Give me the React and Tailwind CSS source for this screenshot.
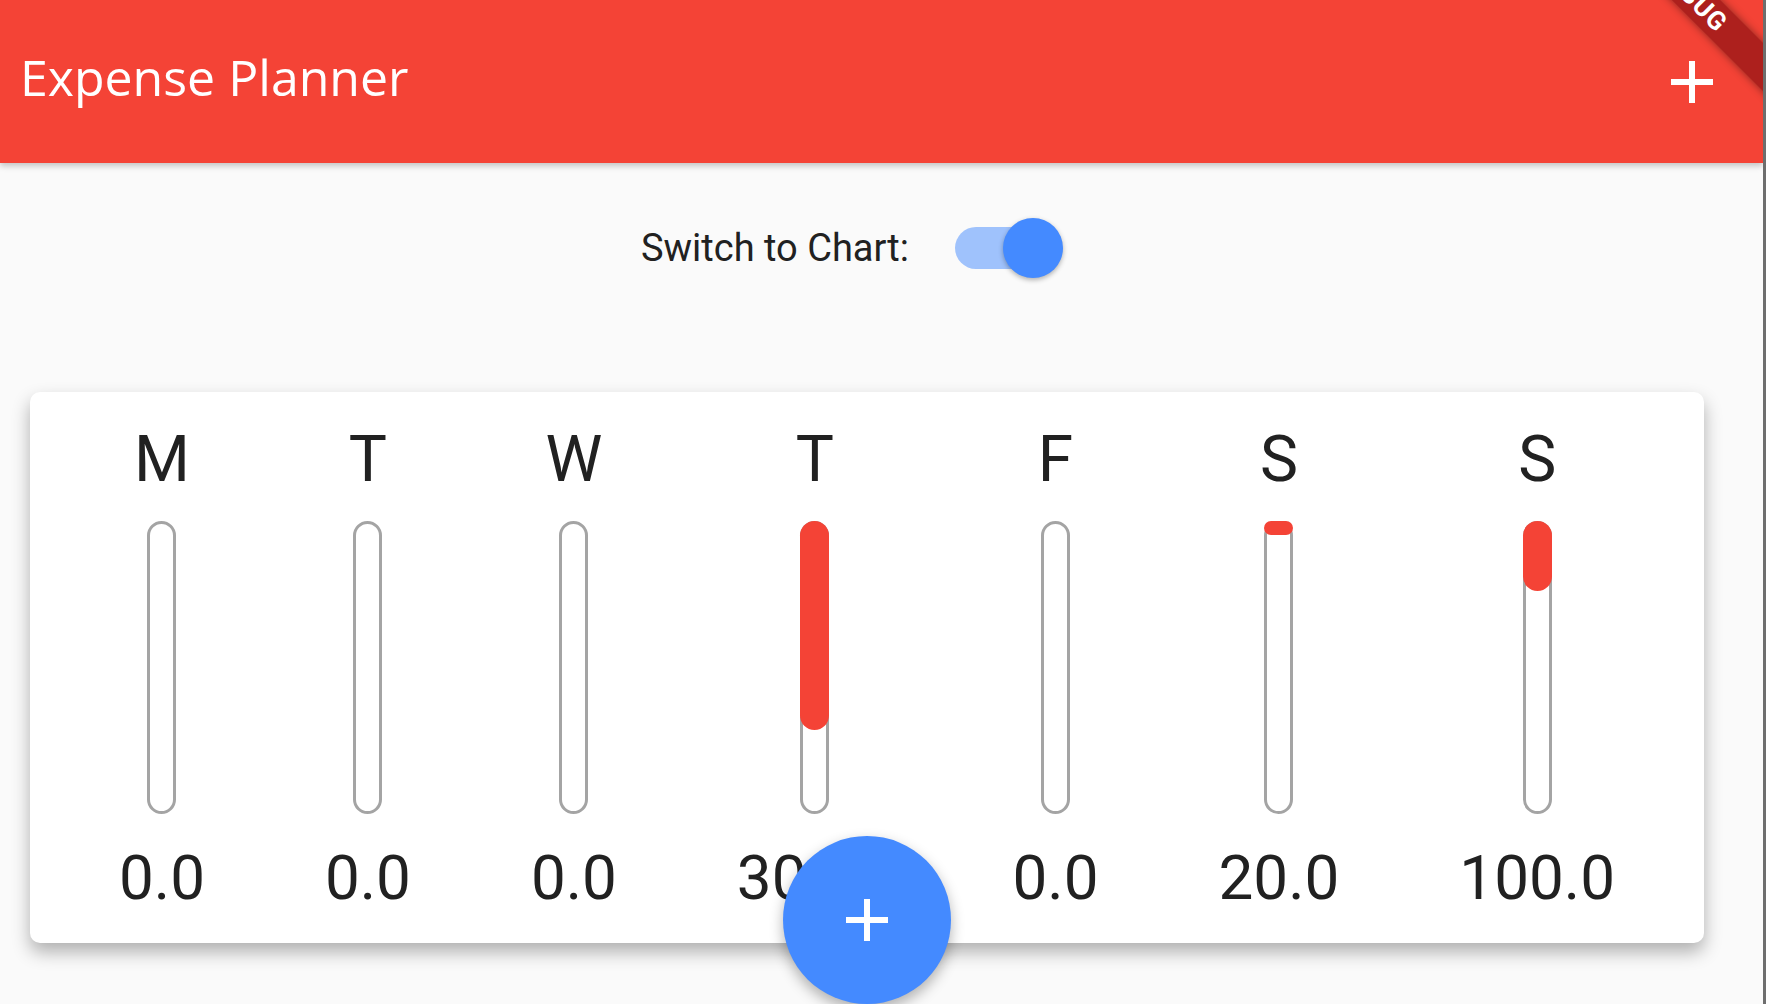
import React from 'react';

const days = [
  { label: 'M', amount: 0 },
  { label: 'T', amount: 0 },
  { label: 'W', amount: 0 },
  { label: 'T', amount: 300 },
  { label: 'F', amount: 0 },
  { label: 'S', amount: 20 },
  { label: 'S', amount: 100 },
];

const total = days.reduce((sum, d) => sum + d.amount, 0);
const BAR_HEIGHT = 293;

function AddIcon({ className }) {
  return (
    <svg viewBox="0 0 24 24" className={className} fill="currentColor">
      <path d="M19 13h-6v6h-2v-6H5v-2h6V5h2v6h6v2z" />
    </svg>
  );
}

function ChartBar({ label, amount }) {
  const fill = total > 0 ? (amount / total) * BAR_HEIGHT : 0;
  return (
    <div className="flex flex-col items-center">
      <div className="h-[64px] text-[64px] leading-none text-[#212121]">{label}</div>
      <div className="relative mt-[29px] h-[293px] w-[29px]">
        <div className="h-full w-full rounded-full border-[3px] border-[#a4a4a4] bg-white" />
        {amount > 0 && (
          <div
            className="absolute left-0 top-0 w-full rounded-full bg-[#f44336]"
            style={{ height: fill }}
          />
        )}
      </div>
      <div className="mt-[33px] h-[62px] text-[62px] leading-none text-[#212121]">
        {amount.toFixed(1)}
      </div>
    </div>
  );
}

export default function App() {
  return (
    <div className="flex h-screen w-full overflow-hidden bg-[#fafafa] font-[Roboto,sans-serif]">
      <div className="relative flex w-[1763px] flex-col overflow-hidden">
        {/* App bar */}
        <header className="relative z-10 flex h-[163px] shrink-0 items-center justify-between bg-[#f44336] pl-[20px] pr-[35px] shadow-[0_3px_6px_rgba(0,0,0,0.22)]">
          <h1 className="mb-[9px] font-['Open_Sans',sans-serif] text-[50px] font-medium leading-none text-white">
            Expense Planner
          </h1>
          <AddIcon className="h-[72px] w-[72px] text-white" />
        </header>

        {/* debug ribbon */}
        <div className="absolute left-[1542px] top-[-21px] z-20 flex h-[34px] w-[300px] rotate-45 items-center justify-center bg-[#ad201d] shadow-[0_0_8px_rgba(0,0,0,0.45)]">
          <span className="text-[26px] font-bold leading-none tracking-[1px] text-white">DEBUG</span>
        </div>

        <main className="flex flex-col">
          {/* switch row */}
          <div className="mt-[55px] flex h-[60px] items-center justify-center">
            <span className="w-[266px] whitespace-nowrap text-[38px] leading-none text-[#212121]">
              Switch to Chart:
            </span>
            <div className="relative h-[60px] w-[215px]">
              <div className="absolute left-[48px] top-[9px] h-[42px] w-[100px] rounded-full bg-[#9fc2fc]" />
              <div className="absolute left-[96px] top-0 h-[60px] w-[60px] rounded-full bg-[#448aff] shadow-[0_2px_5px_rgba(0,0,0,0.3)]" />
            </div>
          </div>

          {/* chart card */}
          <div className="ml-[30px] mt-[114px] flex w-[1674px] justify-around rounded-[10px] bg-white px-[29px] pb-[34px] pt-[36px] shadow-[0_9px_18px_rgba(0,0,0,0.3)]">
            {days.map((d, i) => (
              <ChartBar key={i} label={d.label} amount={d.amount} />
            ))}
          </div>
        </main>

        {/* FAB */}
        <button className="absolute left-[783px] top-[836px] flex h-[168px] w-[168px] items-center justify-center rounded-full bg-[#448aff] text-white shadow-[0_6px_14px_rgba(0,0,0,0.3)]">
          <AddIcon className="h-[72px] w-[72px]" />
        </button>
      </div>
      <div className="w-[3px] shrink-0 bg-[#6e6e6e]" />
    </div>
  );
}
